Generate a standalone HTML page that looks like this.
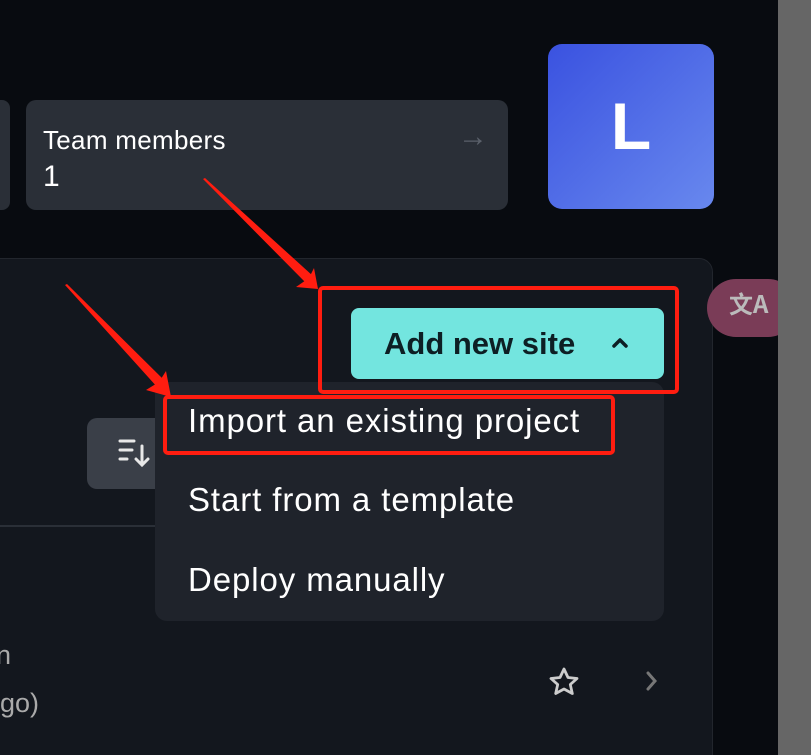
<!DOCTYPE html>
<html><head><meta charset="utf-8"><style>
*{margin:0;padding:0;box-sizing:border-box}
html,body{width:811px;height:755px;overflow:hidden}
body{background:#080b10;font-family:"Liberation Sans",sans-serif;position:relative}
.abs{position:absolute}
</style></head><body>
<div class="abs" style="left:-20px;top:100px;width:30px;height:110px;background:#2a2f37;border-radius:8px"></div>
<div class="abs" style="left:26px;top:100px;width:482px;height:110px;background:#2a2f37;border-radius:10px"></div>
<div class="abs" style="left:43px;top:125px;color:#fff;font-size:26px;letter-spacing:0.3px">Team members</div>
<div class="abs" style="left:43px;top:160px;color:#fff;font-size:30px">1</div>
<div class="abs" style="left:458px;top:120px;color:#5b616b;font-size:30px">→</div>
<div class="abs" style="left:548px;top:44px;width:166px;height:165px;border-radius:14px;background:linear-gradient(135deg,#3a52e0,#6888ee);color:#fff;font-weight:bold;font-size:66px;text-align:center;line-height:165px">L</div>
<div class="abs" style="left:-20px;top:258px;width:733px;height:520px;background:#13171e;border:1px solid #22262d;border-radius:14px"></div>
<div class="abs" style="left:0;top:525px;width:155px;height:2px;background:#2a2f37"></div>
<div class="abs" style="left:707px;top:279px;width:90px;height:58px;border-radius:29px;background:#7a3c57;color:#bbb;font-size:24px;padding:6px 0 0 22px;font-family:'Noto Sans CJK SC',sans-serif;font-weight:bold">文A</div>
<div class="abs" style="left:778px;top:0;width:33px;height:755px;background:#666"></div>
<div class="abs" style="left:87px;top:418px;width:90px;height:71px;border-radius:10px;background:#3a3f48"></div>
<svg class="abs" style="left:118px;top:438px" width="36" height="32"><g stroke="#e8e8e8" stroke-width="3" stroke-linecap="round" fill="none"><path d="M2 3h14M2 12h12M2 21h7M24 8v19M18 21l6 6 6-6"/></g></svg>
<div class="abs" style="left:351px;top:308px;width:313px;height:71px;border-radius:8px;background:#73e5df;color:#0d1f24;font-weight:bold;font-size:31px;line-height:71px;padding-left:33px">Add new site</div>
<svg class="abs" style="left:610px;top:335px" width="20" height="16"><path d="M4 11l6-6 6 6" fill="none" stroke="#0d1f24" stroke-width="3.5" stroke-linecap="round" stroke-linejoin="round"/></svg>
<div class="abs" style="left:155px;top:382px;width:509px;height:239px;border-radius:12px;background:#1f232b;color:#fff;font-size:33px;letter-spacing:0.9px">
<div class="abs" style="left:33px;top:20px">Import an existing project</div>
<div class="abs" style="left:33px;top:99px">Start from a template</div>
<div class="abs" style="left:33px;top:179px">Deploy manually</div>
</div>
<div class="abs" style="left:-4px;top:640px;color:#aaa;font-size:27px">n</div>
<div class="abs" style="left:0;top:688px;color:#aaa;font-size:27px">go)</div>
<svg class="abs" style="left:548px;top:666px" width="32" height="32"><path d="M16 3l4 8.5 9 1-6.7 6 2 9L16 23l-8.3 4.5 2-9L3 12.5l9-1z" fill="none" stroke="#ccc" stroke-width="2.8" stroke-linejoin="round"/></svg>
<svg class="abs" style="left:642px;top:670px" width="20" height="22"><path d="M6 3l7 8-7 8" fill="none" stroke="#777" stroke-width="3" stroke-linecap="round"/></svg>
<svg class="abs" style="left:0;top:0" width="811" height="755">
<g fill="none" stroke="#ff1d10" stroke-width="4">
<rect x="320" y="288" width="357" height="104" rx="3"/>
<rect x="165" y="397" width="448" height="56" rx="3"/>
</g>
<g fill="#ff1d10">
<polygon points="318,289 296,287 309,278 314,268"/>
<polygon points="171,397 146,390 159,382 166,371"/>
<polygon points="203,179 205,178 313,276 306,283"/>
<polygon points="65,285 67,284 165,381 158,388"/>
</g>
</svg>
</body></html>
